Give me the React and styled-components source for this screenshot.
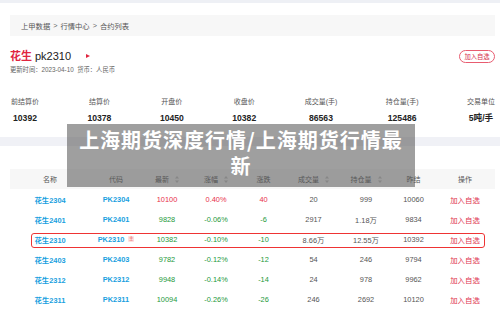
import React from "react";
import styled, { createGlobalStyle } from "styled-components";

const Global = createGlobalStyle`
  html, body { margin: 0; padding: 0; background: #fff; }
  body { font-family: "Liberation Sans", "Noto Sans CJK SC", sans-serif; color: #333; }
  * { box-sizing: border-box; }
`;

const Page = styled.div`
  position: relative;
  width: 500px;
  height: 311px;
  overflow: hidden;
  background: #fff;
`;

const TopBar = styled.div`
  height: 3px;
  background: #eef0f5;
`;

const Content = styled.div`
  padding: 12px 5px 0 10px;
`;

const Breadcrumb = styled.div`
  height: 21px;
  background: #f7f7f7;
  display: flex;
  align-items: center;
  padding-left: 11px;
  font-size: 7.3px;
  color: #555;
`;

const Sep = styled.span`
  margin: 0 3px;
  color: #666;
`;

const TitleRow = styled.div`
  margin-top: 13px;
  height: 14px;
  display: flex;
  align-items: center;
  justify-content: space-between;
`;

const Title = styled.div`
  display: flex;
  align-items: center;
  font-size: 11px;
  line-height: 14px;
  color: #222;
`;

const RedName = styled.span`
  color: #e0253f;
  font-weight: 600;
  margin-right: 3px;
`;

const Tri = styled.span`
  width: 0;
  height: 0;
  margin-left: 15px;
  border-top: 2.5px solid transparent;
  border-bottom: 2.5px solid transparent;
  border-left: 4px solid #e0253f;
`;

const FavButton = styled.div`
  width: 36px;
  height: 13px;
  border: 1px solid #e85c70;
  border-radius: 7px;
  display: flex;
  align-items: center;
  justify-content: center;
  font-size: 6.3px;
  color: #d6304a;
`;

const Meta = styled.div`
  margin-top: 2px;
  line-height: 10px;
  font-size: 6.3px;
  color: #666;
`;

const Stats = styled.div`
  margin-top: 22px;
  padding-left: 1px;
  display: flex;
  justify-content: space-between;
`;

const Stat = styled.div`
  display: flex;
  flex-direction: column;
  align-items: center;
`;

const StatLabel = styled.div`
  font-size: 7px;
  line-height: 10px;
  color: #555;
`;

const StatValue = styled.div`
  margin-top: 5px;
  font-size: 8.6px;
  line-height: 12px;
  font-weight: 700;
  color: #222;
`;

const Band = styled.div`
  margin-top: 13px;
  height: 9px;
  background: #f0f1f6;
`;

const TableWrap = styled.div`
  padding: 23px 5px 0 10px;
`;

const cols = "80px 52px 50px 48px 47px 53px 52px 43px 60px";

const HeaderRow = styled.div`
  display: grid;
  grid-template-columns: ${cols};
  height: 20px;
  background: #f7f7f7;
`;

const HeadCell = styled.div`
  display: flex;
  align-items: center;
  justify-content: center;
  font-size: 7px;
  color: #555;
`;

const Row = styled.div`
  position: relative;
  display: grid;
  grid-template-columns: ${cols};
  height: 20px;
`;

const Cell = styled.div`
  display: flex;
  align-items: center;
  justify-content: center;
  font-size: 7.4px;
  color: ${(p) => p.$color || "#555"};
  font-weight: ${(p) => (p.$bold ? 600 : 400)};
`;

const Highlight = styled.div`
  position: absolute;
  left: 21px;
  right: 10px;
  top: 4px;
  bottom: 1px;
  border: 1.5px solid #ee3434;
  border-radius: 3px;
  pointer-events: none;
`;

const Badge = styled.span`
  margin-left: 4px;
  width: 6px;
  height: 6px;
  border-radius: 1px;
  background: #fde0e0;
  color: #e84a4a;
  font-size: 4.5px;
  line-height: 6px;
  text-align: center;
  font-weight: 400;
`;

const Overlay = styled.div`
  position: absolute;
  left: 67px;
  top: 124px;
  width: 348px;
  padding: 3px 10px 8px;
  background: rgba(90, 90, 90, 0.58);
  color: #fff;
  font-family: "Noto Sans CJK SC", sans-serif;
  font-weight: 700;
  font-size: 20px;
  line-height: 26px;
  letter-spacing: 1px;
  text-align: center;
`;

const SortIcon = () => (
  <svg width="4" height="7" viewBox="0 0 4 7" style={{ marginLeft: 6 }}>
    <path d="M2 0 L4 2.6 L0 2.6 Z" fill="#c4c4c4" />
    <path d="M2 7 L4 4.4 L0 4.4 Z" fill="#c4c4c4" />
  </svg>
);

const RED = "#e8304a";
const GREEN = "#23993a";
const BLUE = "#1a9fe0";
const OPRED = "#e0354f";

const stats = [
  ["前结算价", "10392"],
  ["结算价", "10378"],
  ["开盘价", "10450"],
  ["收盘价", "10382"],
  ["成交量(手)", "86563"],
  ["持仓量(手)", "125486"],
  ["交易单位", "5吨/手"],
];

const headers = [
  ["名称", false],
  ["代码", false],
  ["最新", true],
  ["涨幅", true],
  ["涨跌", false],
  ["成交量", true],
  ["持仓量", true],
  ["昨结", false],
  ["操作", false],
];

const rows = [
  ["花生2304", "PK2304", "10100", "0.40%", "40", "20", "999", "10060", true],
  ["花生2401", "PK2401", "9828", "-0.06%", "-6", "2917", "1.18万", "9834", false],
  ["花生2310", "PK2310", "10382", "-0.10%", "-10", "8.66万", "12.55万", "10392", false, true],
  ["花生2403", "PK2403", "9782", "-0.12%", "-12", "54", "246", "9794", false],
  ["花生2312", "PK2312", "9948", "-0.14%", "-14", "24", "978", "9962", false],
  ["花生2311", "PK2311", "10094", "-0.26%", "-26", "246", "2692", "10120", false],
];

export default function App() {
  return (
    <Page>
      <Global />
      <TopBar />
      <Content>
        <Breadcrumb>
          上甲数据<Sep>&gt;</Sep>行情中心<Sep>&gt;</Sep>合约列表
        </Breadcrumb>
        <TitleRow>
          <Title>
            <RedName>花生</RedName>pk2310
            <Tri />
          </Title>
          <FavButton>加入自选</FavButton>
        </TitleRow>
        <Meta>更新时间：2023-04-10&nbsp;&nbsp;货币：人民币</Meta>
        <Stats>
          {stats.map(([l, v]) => (
            <Stat key={l}>
              <StatLabel>{l}</StatLabel>
              <StatValue>{v}</StatValue>
            </Stat>
          ))}
        </Stats>
      </Content>
      <Band />
      <TableWrap>
        <HeaderRow>
          {headers.map(([h, s]) => (
            <HeadCell key={h}>
              {h}
              {s && <SortIcon />}
            </HeadCell>
          ))}
        </HeaderRow>
        {rows.map((r) => {
          const c = r[8] ? RED : GREEN;
          return (
            <Row key={r[0]}>
              <Cell $color={BLUE} $bold>{r[0]}</Cell>
              <Cell $color={BLUE} $bold>
                {r[1]}
                {r[9] && <Badge>主</Badge>}
              </Cell>
              <Cell $color={c}>{r[2]}</Cell>
              <Cell $color={c}>{r[3]}</Cell>
              <Cell $color={c}>{r[4]}</Cell>
              <Cell>{r[5]}</Cell>
              <Cell>{r[6]}</Cell>
              <Cell>{r[7]}</Cell>
              <Cell $color={OPRED}>加入自选</Cell>
              {r[9] && <Highlight />}
            </Row>
          );
        })}
      </TableWrap>
      <Overlay>上海期货深度行情/上海期货行情最新</Overlay>
    </Page>
  );
}
